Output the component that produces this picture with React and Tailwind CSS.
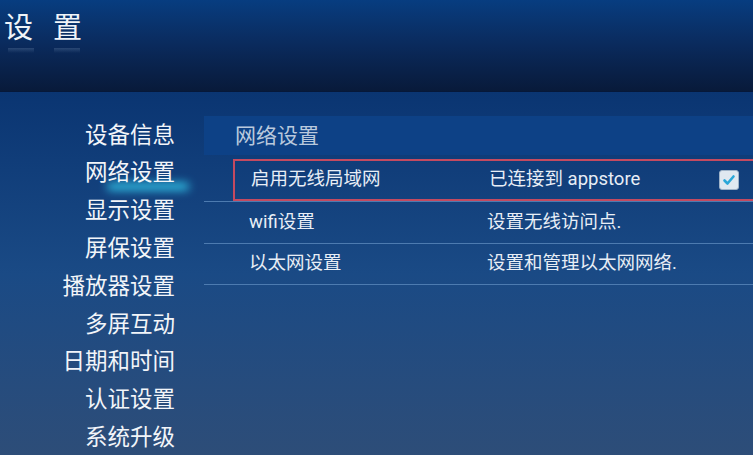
import React from 'react';

const menu = ['设备信息', '网络设置', '显示设置', '屏保设置', '播放器设置', '多屏互动', '日期和时间', '认证设置', '系统升级'];

const rows = [
    { name: '启用无线局域网', desc: '已连接到 appstore', checked: true },
    { name: 'wifi设置', desc: '设置无线访问点.' },
    { name: '以太网设置', desc: '设置和管理以太网网络.' },
];

export default function App() {
    return (
        <div
            className="w-[753px] h-[455px] overflow-hidden flex flex-col text-[#e8eef6]"
            style={{ fontFamily: 'Roboto, "Noto Sans CJK SC", "Noto Sans", sans-serif' }}
        >
            {/* Header */}
            <div className="h-[92px] shrink-0 bg-gradient-to-b from-[#073d80] via-[#0a2a5c] to-[#081a3a] border-b border-[#06183a] pl-[4px] pt-[8px]">
                <div className="flex gap-[20px] text-[29px] leading-[40px] text-[#f0f4f8]">
                    <span>设</span>
                    <span>置</span>
                </div>
                <div className="flex gap-[20px] ml-[4px]">
                    <div className="w-[26px] h-[5px] bg-gradient-to-b from-[#8aa4c4]/25 to-transparent" />
                    <div className="w-[26px] h-[5px] bg-gradient-to-b from-[#8aa4c4]/25 to-transparent" />
                </div>
            </div>

            {/* Body */}
            <div className="flex-1 flex bg-gradient-to-b from-[#0a3572] via-[#1a4a85] to-[#2d4d78]">
                {/* Left menu */}
                <div className="w-[204px] shrink-0 flex flex-col items-end pr-[29px] mt-[24px]">
                    {menu.map((m, i) => (
                        <div key={i} className="relative h-[37.8px] flex items-center text-[22.5px] leading-none text-[#f2f5f9]">
                            {i === 1 && (
                                <div className="absolute left-[22px] right-[-14px] bottom-[2px] h-[7px] rounded-full bg-[#38e0ff] blur-[5px] opacity-90" />
                            )}
                            <span className="relative">{m}</span>
                        </div>
                    ))}
                </div>

                {/* Right panel */}
                <div className="flex-1 pt-[24px]">
                    <div className="h-[39px] bg-[#0d4186] flex items-center pl-[31px] pt-[3px] text-[21px] text-[#b9c9dd]">网络设置</div>
                    <div className="mt-[4px]">
                        {rows.map((r, i) => (
                            <div key={i} className={`flex items-center h-[42px] border-[#4d7bb0] ${i === 0 ? '' : 'border-t'} ${i === 2 ? 'border-b' : ''}`}>
                                <div className={`flex items-center h-full flex-1 ml-[29px] pl-[16px] text-[18.5px] ${i === 0 ? 'border-2 border-r-0 border-[#c44a60]' : ''}`}>
                                    <div className="w-[238px]">{r.name}</div>
                                    <div className="flex-1">{r.desc}</div>
                                    {r.checked && (
                                        <div className="w-[20px] h-[20px] mr-[14px] rounded-[3px] bg-[#dfe8f0] border border-[#9fb3c8] flex items-center justify-center">
                                            <svg width="14" height="14" viewBox="0 0 14 14">
                                                <path d="M2.5 7.5 L5.5 10.5 L11.5 3.5" stroke="#2aa7d8" strokeWidth="2.6" fill="none" strokeLinecap="round" strokeLinejoin="round" />
                                            </svg>
                                        </div>
                                    )}
                                </div>
                            </div>
                        ))}
                    </div>
                </div>
            </div>
        </div>
    );
}
